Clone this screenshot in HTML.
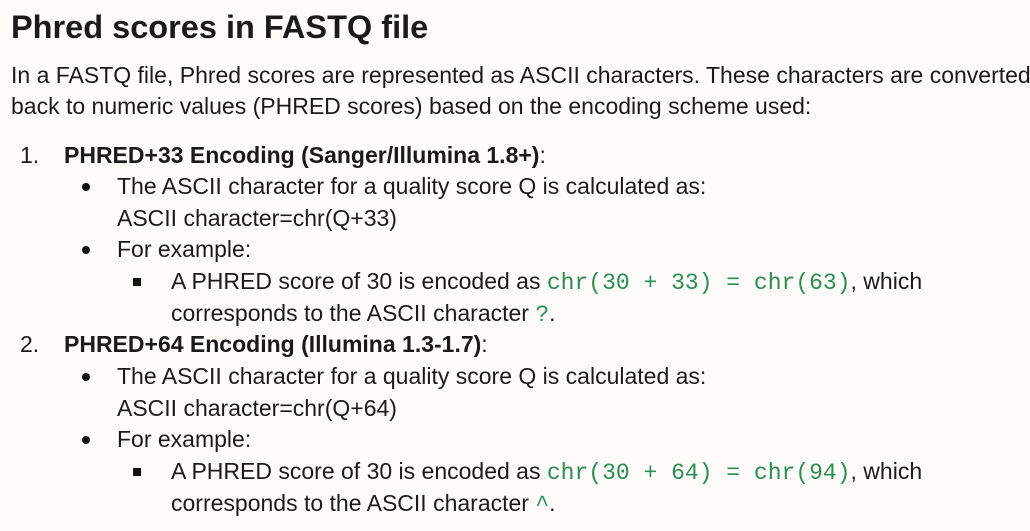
<!DOCTYPE html>
<html><head><style>
body{margin:0;width:1030px;height:531px;background:#fefcf8;font-family:"Liberation Sans",sans-serif;color:#1a1a1a;overflow:hidden;position:relative}
.l{position:absolute;white-space:nowrap;font-size:23px;line-height:32px}
h1{position:absolute;left:11px;top:9px;margin:0;font-size:32.5px;font-weight:bold;white-space:nowrap}
code{font-family:"Liberation Mono",monospace;color:#2e8b57;font-size:23px}
.b{font-weight:bold}
.dot{position:absolute;width:8px;height:8px;border-radius:50%;background:#111}
.sq{position:absolute;width:8px;height:8px;background:#111}
</style></head><body>
<h1>Phred scores in FASTQ file</h1>
<div class="l" style="left:11px;top:59px">In a FASTQ file, Phred scores are represented as ASCII characters. These characters are converted</div>
<div class="l" style="left:11px;top:90px">back to numeric values (PHRED scores) based on the encoding scheme used:</div>

<div class="l" style="left:20px;top:139px">1.</div>
<div class="l" style="left:64px;top:139px"><span class="b">PHRED+33 Encoding (Sanger/Illumina 1.8+)</span>:</div>
<div class="dot" style="left:82px;top:183px"></div>
<div class="l" style="left:117px;top:170px">The ASCII character for a quality score Q is calculated as:</div>
<div class="l" style="left:117px;top:202px">ASCII character=chr(Q+33)</div>
<div class="dot" style="left:82px;top:246px"></div>
<div class="l" style="left:117px;top:233px">For example:</div>
<div class="sq" style="left:133px;top:278px"></div>
<div class="l" style="left:171px;top:265px">A PHRED score of 30 is encoded as <code>chr(30 + 33) = chr(63)</code>, which</div>
<div class="l" style="left:171px;top:297px">corresponds to the ASCII character <code>?</code>.</div>

<div class="l" style="left:20px;top:328px">2.</div>
<div class="l" style="left:64px;top:328px"><span class="b">PHRED+64 Encoding (Illumina 1.3-1.7)</span>:</div>
<div class="dot" style="left:82px;top:373px"></div>
<div class="l" style="left:117px;top:360px">The ASCII character for a quality score Q is calculated as:</div>
<div class="l" style="left:117px;top:392px">ASCII character=chr(Q+64)</div>
<div class="dot" style="left:82px;top:436px"></div>
<div class="l" style="left:117px;top:423px">For example:</div>
<div class="sq" style="left:133px;top:468px"></div>
<div class="l" style="left:171px;top:455px">A PHRED score of 30 is encoded as <code>chr(30 + 64) = chr(94)</code>, which</div>
<div class="l" style="left:171px;top:487px">corresponds to the ASCII character <code>^</code>.</div>
</body></html>
